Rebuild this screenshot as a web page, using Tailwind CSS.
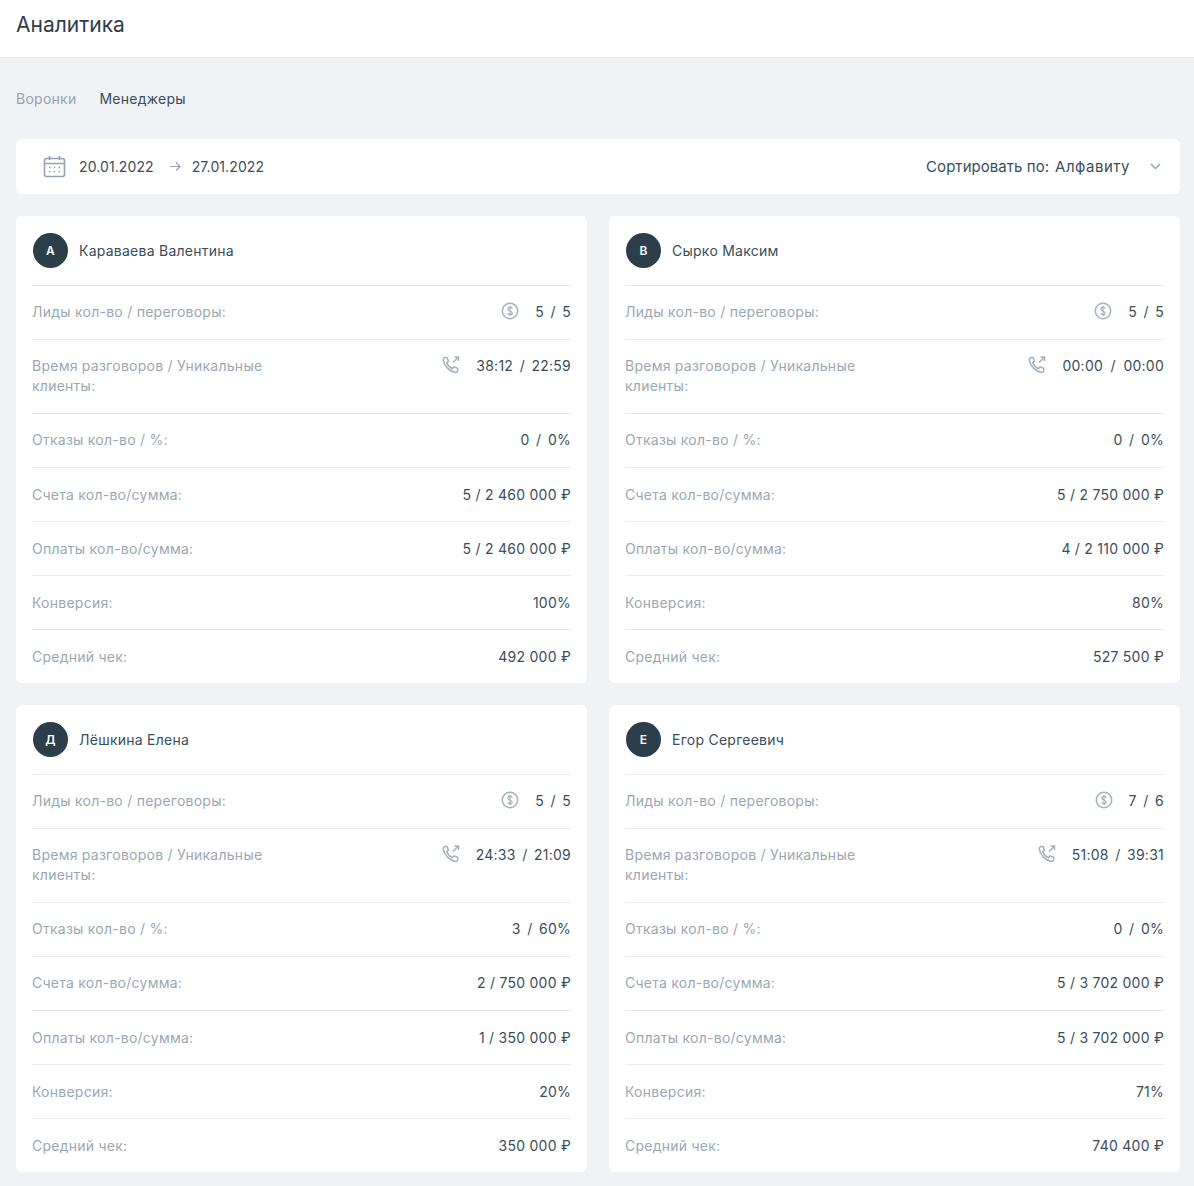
<!doctype html>
<html lang="ru"><head><meta charset="utf-8"><script src="https://cdn.jsdelivr.net/npm/@tailwindcss/browser@4"></script></head>
<body class="bg-[#f0f2f5] font-['Inter',sans-serif] text-[14px] leading-5 text-[#3a4e5a] tracking-[0.25px] h-[1186px] overflow-hidden">
<header class="h-[58px] bg-white border-b border-[#e6e8ec] pl-4 pt-[13px]"><h1 class="text-[21px] leading-6 font-normal tracking-normal text-[#2c3e4a]">Аналитика</h1></header>
<main class="pl-4 pr-[14px]">
<nav class="flex gap-[23px] pt-[31px] h-[81px]"><span class="text-[#94a3b3]">Воронки</span><span>Менеджеры</span></nav>
<section class="flex justify-between items-center h-[55px] bg-white rounded-md pl-[27px] pr-[19px]">
<div class="flex items-center tracking-[0.1px]"><svg class="w-[23px] h-[23px] mr-[13px]" viewBox="0 0 23 23" fill="none" stroke="#94a3b3" stroke-width="1.600"><rect x="1.500" y="3.500" width="20" height="18" rx="2"/><path d="M1.500 8.500h20M6.500 1v4M16.500 1v4"/><path d="M6 12.500h1.500M10.700 12.500h1.500M15.500 12.500h1.500M6 16.500h1.500M10.700 16.500h1.500M15.500 16.500h1.500" stroke-width="1.700"/></svg><span>20.01.2022</span><svg class="w-[11px] h-[11px] ml-[16px] mr-[11px] text-[#94a3b3]" viewBox="0 0 11 11" fill="none" stroke="currentColor" stroke-width="1.200"><path d="M0 5.500h10M6 1.500l4 4-4 4"/></svg><span>27.01.2022</span></div>
<div class="flex items-center text-[15px] tracking-[0.05px]"><span>Сортировать по:</span><span class="ml-[6px] tracking-[0.5px]">Алфавиту</span><svg class="w-[11px] h-[7px] ml-[20px]" viewBox="0 0 11 7" fill="none" stroke="#94a3b3" stroke-width="1.500"><path d="M1 1l4.500 4.500L10 1"/></svg></div>
</section>
<div class="grid grid-cols-2 gap-[22px] mt-[22px]">

<article class="bg-white rounded-md px-4 h-[467px]">
<div class="flex items-center h-[70px] border-b border-[#e9ebee]"><span class="w-[35px] h-[35px] ml-[1px] mr-[11px] rounded-full bg-[#2c3e4a] text-white text-[12px] font-semibold flex items-center justify-center">А</span><span>Караваева Валентина</span></div>
<div class="flex justify-between h-[54px] pt-[16px] border-b border-[#e9ebee]"><span class="text-[#9aa8b4]">Лиды кол-во / переговоры:</span><span class="flex"><svg class="w-[18px] h-[18px] mr-[16px]" viewBox="0 0 18 18" fill="none" stroke="#a5b1bd" stroke-width="1.500"><circle cx="9" cy="9" r="7.700"/><path d="M11.200 6.800C11 5.800 10 5.200 9 5.200 7.700 5.200 6.800 6 6.800 7S7.700 8.500 9 9s2.200 1 2.200 2S10.300 12.800 9 12.800c-1 0-2-.6-2.200-1.600M9 3.800v10.400" stroke-width="1.200"/></svg><span>5<span class="mx-[6.500px]">/</span>5</span></span></div>
<div class="flex justify-between h-[74px] pt-[16px] border-b border-[#e9ebee]"><span class="text-[#9aa8b4] w-[240px]">Время разговоров / Уникальные клиенты:</span><span class="flex"><svg class="w-[18px] h-[18px] mr-[16px]" viewBox="0 0 18 18" fill="none" stroke="#a5b1bd" stroke-width="1.500"><path d="M3.200 1.500H5l1.500 3.700-1.800 1.500c1 2.500 3.300 4.800 5.800 6l1.500-1.900 3.700 1.500v2c0 1.200-1 2.200-2.200 2.100C7.500 15.500 1.800 9.500 1.200 3.600 1.100 2.500 2 1.500 3.200 1.500zM11 6.500l5-5M12.500 1h4v4"/></svg><span>38:12<span class="mx-[6.500px]">/</span>22:59</span></span></div>
<div class="flex justify-between h-[54px] pt-[16px] border-b border-[#e9ebee]"><span class="text-[#9aa8b4]">Отказы кол-во / %:</span><span>0<span class="mx-[6.500px]">/</span>0%</span></div>
<div class="flex justify-between h-[54px] pt-[17px] border-b border-[#e9ebee]"><span class="text-[#9aa8b4]">Счета кол-во/сумма:</span><span>5 / 2 460 000 ₽</span></div>
<div class="flex justify-between h-[54px] pt-[17px] border-b border-[#e9ebee]"><span class="text-[#9aa8b4]">Оплаты кол-во/сумма:</span><span>5 / 2 460 000 ₽</span></div>
<div class="flex justify-between h-[54px] pt-[17px] border-b border-[#e9ebee]"><span class="text-[#9aa8b4]">Конверсия:</span><span>100%</span></div>
<div class="flex justify-between h-[53px] pt-[17px]"><span class="text-[#9aa8b4]">Средний чек:</span><span>492 000 ₽</span></div>
</article>

<article class="bg-white rounded-md px-4 h-[467px]">
<div class="flex items-center h-[70px] border-b border-[#e9ebee]"><span class="w-[35px] h-[35px] ml-[1px] mr-[11px] rounded-full bg-[#2c3e4a] text-white text-[12px] font-semibold flex items-center justify-center">В</span><span>Сырко Максим</span></div>
<div class="flex justify-between h-[54px] pt-[16px] border-b border-[#e9ebee]"><span class="text-[#9aa8b4]">Лиды кол-во / переговоры:</span><span class="flex"><svg class="w-[18px] h-[18px] mr-[16px]" viewBox="0 0 18 18" fill="none" stroke="#a5b1bd" stroke-width="1.500"><circle cx="9" cy="9" r="7.700"/><path d="M11.200 6.800C11 5.800 10 5.200 9 5.200 7.700 5.200 6.800 6 6.800 7S7.700 8.500 9 9s2.200 1 2.200 2S10.300 12.800 9 12.800c-1 0-2-.6-2.200-1.600M9 3.800v10.400" stroke-width="1.200"/></svg><span>5<span class="mx-[6.500px]">/</span>5</span></span></div>
<div class="flex justify-between h-[74px] pt-[16px] border-b border-[#e9ebee]"><span class="text-[#9aa8b4] w-[240px]">Время разговоров / Уникальные клиенты:</span><span class="flex"><svg class="w-[18px] h-[18px] mr-[16px]" viewBox="0 0 18 18" fill="none" stroke="#a5b1bd" stroke-width="1.500"><path d="M3.200 1.500H5l1.500 3.700-1.800 1.500c1 2.500 3.300 4.800 5.800 6l1.500-1.900 3.700 1.500v2c0 1.200-1 2.200-2.200 2.100C7.500 15.500 1.800 9.500 1.200 3.600 1.100 2.500 2 1.500 3.200 1.500zM11 6.500l5-5M12.500 1h4v4"/></svg><span>00:00<span class="mx-[7.500px]">/</span>00:00</span></span></div>
<div class="flex justify-between h-[54px] pt-[16px] border-b border-[#e9ebee]"><span class="text-[#9aa8b4]">Отказы кол-во / %:</span><span>0<span class="mx-[6.500px]">/</span>0%</span></div>
<div class="flex justify-between h-[54px] pt-[17px] border-b border-[#e9ebee]"><span class="text-[#9aa8b4]">Счета кол-во/сумма:</span><span>5 / 2 750 000 ₽</span></div>
<div class="flex justify-between h-[54px] pt-[17px] border-b border-[#e9ebee]"><span class="text-[#9aa8b4]">Оплаты кол-во/сумма:</span><span>4 / 2 110 000 ₽</span></div>
<div class="flex justify-between h-[54px] pt-[17px] border-b border-[#e9ebee]"><span class="text-[#9aa8b4]">Конверсия:</span><span>80%</span></div>
<div class="flex justify-between h-[53px] pt-[17px]"><span class="text-[#9aa8b4]">Средний чек:</span><span>527 500 ₽</span></div>
</article>

<article class="bg-white rounded-md px-4 h-[467px]">
<div class="flex items-center h-[70px] border-b border-[#e9ebee]"><span class="w-[35px] h-[35px] ml-[1px] mr-[11px] rounded-full bg-[#2c3e4a] text-white text-[12px] font-semibold flex items-center justify-center">Д</span><span>Лёшкина Елена</span></div>
<div class="flex justify-between h-[54px] pt-[16px] border-b border-[#e9ebee]"><span class="text-[#9aa8b4]">Лиды кол-во / переговоры:</span><span class="flex"><svg class="w-[18px] h-[18px] mr-[16px]" viewBox="0 0 18 18" fill="none" stroke="#a5b1bd" stroke-width="1.500"><circle cx="9" cy="9" r="7.700"/><path d="M11.200 6.800C11 5.800 10 5.200 9 5.200 7.700 5.200 6.800 6 6.800 7S7.700 8.500 9 9s2.200 1 2.200 2S10.300 12.800 9 12.800c-1 0-2-.6-2.200-1.600M9 3.800v10.400" stroke-width="1.200"/></svg><span>5<span class="mx-[6.500px]">/</span>5</span></span></div>
<div class="flex justify-between h-[74px] pt-[16px] border-b border-[#e9ebee]"><span class="text-[#9aa8b4] w-[240px]">Время разговоров / Уникальные клиенты:</span><span class="flex"><svg class="w-[18px] h-[18px] mr-[16px]" viewBox="0 0 18 18" fill="none" stroke="#a5b1bd" stroke-width="1.500"><path d="M3.200 1.500H5l1.500 3.700-1.800 1.500c1 2.500 3.300 4.800 5.800 6l1.500-1.900 3.700 1.500v2c0 1.200-1 2.200-2.200 2.100C7.500 15.500 1.800 9.500 1.200 3.600 1.100 2.500 2 1.500 3.200 1.500zM11 6.500l5-5M12.500 1h4v4"/></svg><span>24:33<span class="mx-[6.500px]">/</span>21:09</span></span></div>
<div class="flex justify-between h-[54px] pt-[16px] border-b border-[#e9ebee]"><span class="text-[#9aa8b4]">Отказы кол-во / %:</span><span>3<span class="mx-[6.500px]">/</span>60%</span></div>
<div class="flex justify-between h-[54px] pt-[16px] border-b border-[#e9ebee]"><span class="text-[#9aa8b4]">Счета кол-во/сумма:</span><span>2 / 750 000 ₽</span></div>
<div class="flex justify-between h-[54px] pt-[17px] border-b border-[#e9ebee]"><span class="text-[#9aa8b4]">Оплаты кол-во/сумма:</span><span>1 / 350 000 ₽</span></div>
<div class="flex justify-between h-[54px] pt-[17px] border-b border-[#e9ebee]"><span class="text-[#9aa8b4]">Конверсия:</span><span>20%</span></div>
<div class="flex justify-between h-[53px] pt-[17px]"><span class="text-[#9aa8b4]">Средний чек:</span><span>350 000 ₽</span></div>
</article>

<article class="bg-white rounded-md px-4 h-[467px]">
<div class="flex items-center h-[70px] border-b border-[#e9ebee]"><span class="w-[35px] h-[35px] ml-[1px] mr-[11px] rounded-full bg-[#2c3e4a] text-white text-[12px] font-semibold flex items-center justify-center">Е</span><span>Егор Сергеевич</span></div>
<div class="flex justify-between h-[54px] pt-[16px] border-b border-[#e9ebee]"><span class="text-[#9aa8b4]">Лиды кол-во / переговоры:</span><span class="flex"><svg class="w-[18px] h-[18px] mr-[16px]" viewBox="0 0 18 18" fill="none" stroke="#a5b1bd" stroke-width="1.500"><circle cx="9" cy="9" r="7.700"/><path d="M11.200 6.800C11 5.800 10 5.200 9 5.200 7.700 5.200 6.800 6 6.800 7S7.700 8.500 9 9s2.200 1 2.200 2S10.300 12.800 9 12.800c-1 0-2-.6-2.200-1.600M9 3.800v10.400" stroke-width="1.200"/></svg><span>7<span class="mx-[6.500px]">/</span>6</span></span></div>
<div class="flex justify-between h-[74px] pt-[16px] border-b border-[#e9ebee]"><span class="text-[#9aa8b4] w-[240px]">Время разговоров / Уникальные клиенты:</span><span class="flex"><svg class="w-[18px] h-[18px] mr-[16px]" viewBox="0 0 18 18" fill="none" stroke="#a5b1bd" stroke-width="1.500"><path d="M3.200 1.500H5l1.500 3.700-1.800 1.500c1 2.500 3.300 4.800 5.800 6l1.500-1.900 3.700 1.500v2c0 1.200-1 2.200-2.200 2.100C7.500 15.500 1.800 9.500 1.200 3.600 1.100 2.500 2 1.500 3.200 1.500zM11 6.500l5-5M12.500 1h4v4"/></svg><span>51:08<span class="mx-[6.500px]">/</span>39:31</span></span></div>
<div class="flex justify-between h-[54px] pt-[16px] border-b border-[#e9ebee]"><span class="text-[#9aa8b4]">Отказы кол-во / %:</span><span>0<span class="mx-[6.500px]">/</span>0%</span></div>
<div class="flex justify-between h-[54px] pt-[16px] border-b border-[#e9ebee]"><span class="text-[#9aa8b4]">Счета кол-во/сумма:</span><span>5 / 3 702 000 ₽</span></div>
<div class="flex justify-between h-[54px] pt-[17px] border-b border-[#e9ebee]"><span class="text-[#9aa8b4]">Оплаты кол-во/сумма:</span><span>5 / 3 702 000 ₽</span></div>
<div class="flex justify-between h-[54px] pt-[17px] border-b border-[#e9ebee]"><span class="text-[#9aa8b4]">Конверсия:</span><span>71%</span></div>
<div class="flex justify-between h-[53px] pt-[17px]"><span class="text-[#9aa8b4]">Средний чек:</span><span>740 400 ₽</span></div>
</article>

</div></main></body></html>
